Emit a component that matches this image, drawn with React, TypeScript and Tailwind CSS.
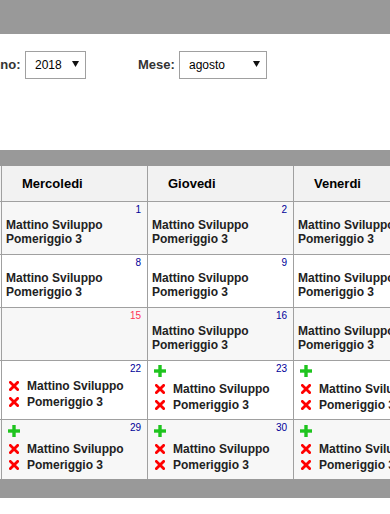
import type { ReactNode } from 'react';

// 1. TYPES
interface DayCell {
  day: number;
  holiday?: boolean;
  text?: boolean;
  icons?: boolean;
  plus?: boolean;
}

// 2. DATI
const giorni = ['Mercoledi', 'Giovedi', 'Venerdi'];

const settimane: { height: string; bg: string; last?: boolean; cells: DayCell[] }[] = [
  { height: 'h-[53px]', bg: 'bg-[#f7f7f7]', cells: [{ day: 1, text: true }, { day: 2, text: true }, { day: 3, text: true }] },
  { height: 'h-[53px]', bg: 'bg-white', cells: [{ day: 8, text: true }, { day: 9, text: true }, { day: 10, text: true }] },
  { height: 'h-[53px]', bg: 'bg-[#f7f7f7]', cells: [{ day: 15, holiday: true }, { day: 16, text: true }, { day: 17, text: true }] },
  {
    height: 'h-[59px]',
    bg: 'bg-white',
    cells: [
      { day: 22, text: true, icons: true },
      { day: 23, text: true, icons: true, plus: true },
      { day: 24, text: true, icons: true, plus: true },
    ],
  },
  {
    height: 'h-[59px]',
    bg: 'bg-[#f7f7f7]',
    last: true,
    cells: [
      { day: 29, text: true, icons: true, plus: true },
      { day: 30, text: true, icons: true, plus: true },
      { day: 31, text: true, icons: true, plus: true },
    ],
  },
];

// 3. ICONE
function PlusIcon() {
  return (
    <svg width="12" height="12" viewBox="0 0 12 12" className="ml-[2px] -mt-[2px]">
      <rect x="4.3" y="0" width="3.4" height="12" fill="#1ec41e" />
      <rect x="0" y="4.3" width="12" height="3.4" fill="#1ec41e" />
    </svg>
  );
}

function CrossIcon() {
  return (
    <svg width="10" height="10" viewBox="0 0 10 10" className="ml-[3px] shrink-0">
      <path d="M1.4 1.4 L8.6 8.6 M8.6 1.4 L1.4 8.6" stroke="#ff0000" strokeWidth="2.8" strokeLinecap="square" />
    </svg>
  );
}

function Arrow() {
  return (
    <svg width="7" height="6" viewBox="0 0 7 6" className="pointer-events-none absolute right-[7px] top-[10px]">
      <path d="M0 0 H7 L3.5 6 Z" fill="#111" />
    </svg>
  );
}

function Select({ width, value, options }: { width: string; value: string; options: string[] }) {
  return (
    <div className={`relative h-[28px] ${width}`}>
      <select
        defaultValue={value}
        className="h-full w-full appearance-none border border-[#a0a0a0] bg-white pl-[9px] text-[12px] text-black outline-none"
      >
        {options.map((o) => (
          <option key={o}>{o}</option>
        ))}
      </select>
      <Arrow />
    </div>
  );
}

function Line({ icons, children }: { icons?: boolean; children: ReactNode }) {
  if (!icons) return <div className="whitespace-nowrap leading-[14px]">{children}</div>;
  return (
    <div className="flex h-[16px] items-center">
      <CrossIcon />
      <span className="ml-[8px] whitespace-nowrap">{children}</span>
    </div>
  );
}

function Cell({ cell }: { cell: DayCell }) {
  return (
    <div className="relative h-full w-[146px] shrink-0 border-l border-[#a0a0a0]">
      <span
        className={`absolute right-[6px] top-[2px] text-[10px] leading-[12px] ${
          cell.holiday ? 'text-[#ff3355]' : 'text-[#000099]'
        }`}
      >
        {cell.day}
      </span>
      {cell.text && (
        <div className="flex h-full flex-col justify-center px-[4px] text-[12px] font-bold text-[#222]">
          {cell.plus ? (
            <div className="h-[14px]">
              <PlusIcon />
            </div>
          ) : (
            <div className="h-[8px]" />
          )}
          <Line icons={cell.icons}>Mattino Sviluppo</Line>
          <Line icons={cell.icons}>Pomeriggio 3</Line>
        </div>
      )}
    </div>
  );
}

// 4. COMPOSANT
export default function App() {
  return (
    <div className="h-[514px] w-[390px] overflow-hidden bg-white font-['Liberation_Sans',Arial,sans-serif]">
      <div className="h-[34px] bg-[#999]" />

      {/* Filtri */}
      <div className="mt-[17px] flex h-[28px] items-center">
        <span className="-ml-[17px] w-[38px] text-[13px] font-bold text-[#333]">Anno:</span>
        <div className="ml-[4px]">
          <Select width="w-[61px]" value="2018" options={['2017', '2018', '2019']} />
        </div>
        <span className="ml-[52px] w-[37px] text-[13px] font-bold text-[#333]">Mese:</span>
        <div className="ml-[4px]">
          <Select width="w-[88px]" value="agosto" options={['luglio', 'agosto', 'settembre']} />
        </div>
      </div>

      {/* Calendario */}
      <div className="mt-[71px] w-[390px] overflow-hidden">
        <div className="h-[16px] bg-[#999]" />
        <div className="flex h-[36px] w-[440px] border-b border-[#a0a0a0] bg-[#f2f2f2] pl-[1px]">
          {giorni.map((g) => (
            <div
              key={g}
              className="flex h-full w-[146px] shrink-0 items-center border-l border-[#a0a0a0] pl-[20px] text-[13px] font-bold leading-[15px] text-black"
            >
              {g}
            </div>
          ))}
        </div>
        {settimane.map((s, i) => (
          <div
            key={i}
            className={`flex w-[440px] pl-[1px] ${s.height} ${s.bg} ${s.last ? '' : 'border-b border-[#a0a0a0]'}`}
          >
            {s.cells.map((c) => (
              <Cell key={c.day} cell={c} />
            ))}
          </div>
        ))}
        <div className="h-[19px] bg-[#999]" />
      </div>
    </div>
  );
}
